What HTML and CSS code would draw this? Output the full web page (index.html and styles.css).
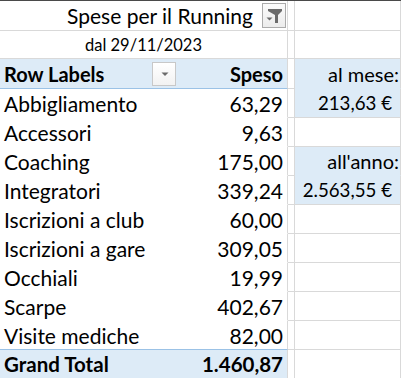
FILE: index.html
```
<!DOCTYPE html>
<html lang="it">
<head>
    <meta charset="UTF-8">
    <meta name="viewport" content="width=device-width, initial-scale=1.0">
    <title>Spese per il Running</title>
    <link rel="stylesheet" href="styles.css">
</head>
<body>
    <div class="sheet">
        <!-- Filtro del report -->
        <div class="cell pivot title">
            <span>Spese per il Running</span>
            <span class="btn filter-btn">
                <svg width="22" height="23" viewBox="0 0 22 23">
                    <path d="M5 5 H19 V7 L15 11 V19 H12 V11 L5 7 Z" fill="#6b6b6b"/>
                    <path d="M3.5 13.5 H9.5 L6.5 16.5 Z" fill="#6b6b6b"/>
                </svg>
            </span>
        </div>
        <div class="cell gap"></div>
        <div class="cell side"></div>

        <div class="cell pivot subtitle">dal 29/11/2023</div>
        <div class="cell gap"></div>
        <div class="cell side"></div>

        <!-- Intestazione pivot -->
        <div class="cell pivot head">
            <div class="lbl">
                <span>Row Labels</span>
                <span class="btn drop-btn">
                    <svg width="22" height="22" viewBox="0 0 22 22">
                        <path d="M8.5 9.5 H15.5 L12 13 Z" fill="#6b6b6b"/>
                    </svg>
                </span>
            </div>
            <div class="val">Speso</div>
        </div>
        <div class="cell gap"></div>
        <div class="cell side blue join">al mese:</div>

        <div class="cell pivot item"><div class="lbl">Abbigliamento</div><div class="val">63,29</div></div>
        <div class="cell gap"></div>
        <div class="cell side blue money">213,63 €</div>

        <div class="cell pivot item"><div class="lbl">Accessori</div><div class="val">9,63</div></div>
        <div class="cell gap"></div>
        <div class="cell side"></div>

        <div class="cell pivot item"><div class="lbl">Coaching</div><div class="val">175,00</div></div>
        <div class="cell gap"></div>
        <div class="cell side blue join">all'anno:</div>

        <div class="cell pivot item"><div class="lbl">Integratori</div><div class="val">339,24</div></div>
        <div class="cell gap"></div>
        <div class="cell side blue money">2.563,55 €</div>

        <div class="cell pivot item"><div class="lbl">Iscrizioni a club</div><div class="val">60,00</div></div>
        <div class="cell gap"></div>
        <div class="cell side"></div>

        <div class="cell pivot item"><div class="lbl">Iscrizioni a gare</div><div class="val">309,05</div></div>
        <div class="cell gap"></div>
        <div class="cell side"></div>

        <div class="cell pivot item"><div class="lbl">Occhiali</div><div class="val">19,99</div></div>
        <div class="cell gap"></div>
        <div class="cell side"></div>

        <div class="cell pivot item"><div class="lbl">Scarpe</div><div class="val">402,67</div></div>
        <div class="cell gap"></div>
        <div class="cell side"></div>

        <div class="cell pivot item last"><div class="lbl">Visite mediche</div><div class="val">82,00</div></div>
        <div class="cell gap"></div>
        <div class="cell side"></div>

        <!-- Totale -->
        <div class="cell pivot total"><div class="lbl">Grand Total</div><div class="val">1.460,87</div></div>
        <div class="cell gap"></div>
        <div class="cell side"></div>
    </div>
</body>
</html>
```

FILE: styles.css
```
body {
    margin: 0;
    padding: 0;
    background: #fff;
    color: #000;
    font-family: Lato, "Liberation Sans", sans-serif;
    font-size: 21px;
    border-top: 1px solid #4a4a4a;
    overflow: hidden;
}

.sheet {
    display: grid;
    grid-template-columns: 288px 7px 106px;
    grid-template-rows: 30px 28px 30px repeat(10, 29px);
}

.cell {
    box-sizing: border-box;
    border-right: 1px solid #d9d9d9;
    border-bottom: 1px solid #d9d9d9;
    display: flex;
    align-items: center;
    white-space: nowrap;
}

/* colonne del pivot */
.pivot {
    display: grid;
    grid-template-columns: 179px 1fr;
    align-items: center;
}

.lbl {
    padding-left: 4px;
    display: flex;
    align-items: center;
    justify-content: space-between;
}

.val {
    text-align: right;
    padding-right: 4px;
}

.title {
    display: flex;
    justify-content: flex-end;
    gap: 9px;
    padding-right: 1px;
}

.subtitle {
    display: flex;
    justify-content: center;
    font-size: 16.5px;
}

.head {
    background: #ddebf7;
    border-bottom-color: #9bc2e6;
    font-weight: bold;
    font-size: 20px;
}

.item {
    border-bottom-color: #fff;
}

.item.last {
    border-bottom-color: #9bc2e6;
}

.total {
    background: #ddebf7;
    font-weight: bold;
    font-size: 20.5px;
}

/* pulsanti filtro */
.btn {
    box-sizing: border-box;
    display: flex;
    border: 1px solid #ababab;
    background: linear-gradient(#fbfbfb, #ececec);
}

.filter-btn {
    width: 24px;
    height: 25px;
}

.drop-btn {
    width: 24px;
    height: 24px;
    margin-right: 3px;
    border-color: #c8c8c8;
    background: linear-gradient(#ffffff, #f2f2f2);
}

/* celle a destra */
.side {
    justify-content: flex-end;
    padding-right: 1px;
    font-size: 20px;
}

.blue {
    background: #ddebf7;
}

.join {
    border-bottom-color: #ddebf7;
}

.money {
    padding-right: 8px;
    font-size: 18.7px;
}
```
